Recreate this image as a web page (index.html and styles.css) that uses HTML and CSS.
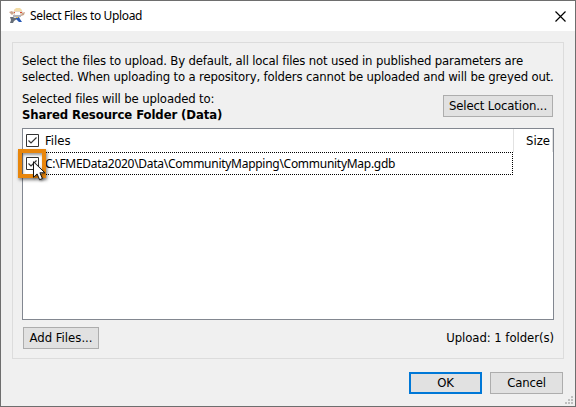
FILE: index.html
```html
<!DOCTYPE html>
<html lang="en">
<head>
<meta charset="utf-8">
<title>Select Files to Upload</title>
<link rel="stylesheet" href="styles.css">
</head>
<body>
<div class="window">
  <header class="titlebar">
    <svg class="app-icon" width="16" height="16" viewBox="0 0 16 16">
      <path d="M4 4l2-3h5l3 3-1 4H5z" fill="#e3d6c8"/>
      <path d="M5 2l2-2h4l2 2v1H5z" fill="#f3dca6"/>
      <path d="M0 4l3-1 2 2-2 2zM13 5l3-1-1 3-3 1z" fill="#c9a48c"/>
      <path d="M5 4h2v1H5zM11 4h2v1h-2z" fill="#d94b32"/>
      <path d="M6 4h5v3H6z" fill="#fff"/>
      <path d="M4 7h8v2H4z" fill="#b3b5ba"/>
      <path d="M1 9h3l2 1 2-1v2l-3 2-1 2H1l1-3z" fill="#666e78"/>
      <path d="M7 10l3-1 1 2 2 3h-3l-3-3z" fill="#2759b5"/>
      <path d="M7 9h2v1H7z" fill="#e5bd49"/>
    </svg>
    <span class="title">Select Files to Upload</span>
    <svg class="close" width="11" height="11" viewBox="0 0 11 11"><path d="M.5.5l10 10M10.5.5l-10 10" stroke="#000" stroke-width="1.2"/></svg>
  </header>
  <section class="group">
    <div class="intro"><div class="l1">Select the files to upload. By default, all local files not used in published parameters are</div><div class="l2">selected. When uploading to a repository, folders cannot be uploaded and will be greyed out.</div></div>
    <div class="location">
      <div class="dest"><div class="l3">Selected files will be uploaded to:</div><div class="l4">Shared Resource Folder (Data)</div></div>
      <button class="btn select"><span>Select Location...</span></button>
    </div>
    <div class="table">
      <div class="thead">
        <div class="col-files"><svg class="check" width="13" height="13" viewBox="0 0 13 13"><path d="M.5.5h12v12H.5z" fill="#fff" stroke="#333"/><path d="M2.5 6.5L5 9l5.5-5.5" fill="none" stroke="#333" stroke-width="1.2"/></svg><span class="files">Files</span></div>
        <div class="col-size"><span>Size</span></div>
      </div>
      <div class="row">
        <svg class="check" width="13" height="13" viewBox="0 0 13 13"><path d="M.5.5h12v12H.5z" fill="#fff" stroke="#333"/><path d="M2.5 6.5L5 9l5.5-5.5" fill="none" stroke="#333" stroke-width="1.2"/></svg>
        <span class="path">C:\FMEData2020\Data\CommunityMapping\CommunityMap.gdb</span>
        <span class="highlight"></span>
        <svg class="cursor" width="13" height="20" viewBox="0 0 13 20"><path d="M.5.8v15.5l3.6-3.4 2.5 5.8 2.8-1.2-2.5-5.7h5z" fill="#fff" stroke="#111"/></svg>
      </div>
    </div>
    <div class="group-foot">
      <button class="btn add"><span>Add Files...</span></button>
      <span class="count">Upload: 1 folder(s)</span>
    </div>
  </section>
  <footer class="actions">
    <button class="btn ok"><span>OK</span></button>
    <button class="btn cancel"><span>Cancel</span></button>
  </footer>
  <svg class="grip" width="8" height="8" viewBox="0 0 8 8" fill="#bfbfbf"><path d="M6 0h2v2H6zM3 3h2v2H3zM6 3h2v2H6zM0 6h2v2H0zM3 6h2v2H3zM6 6h2v2H6z"/></svg>
</div>
</body>
</html>
```
FILE: styles.css
```css
* { box-sizing: border-box; }
body {
  margin: 0;
  color: #000;
  font: 13px/16px "DejaVu Sans Condensed", "DejaVu Sans", sans-serif;
  font-stretch: condensed;
}
span, .intro div, .dest div { white-space: nowrap; }
.window {
  position: relative;
  width: 576px;
  height: 407px;
  border: 1px solid #6e6e6e;
  background: #f0f0f0;
}
.titlebar {
  display: flex;
  align-items: center;
  height: 30px;
  padding: 0 9px 0 8px;
  background: #fff;
}
.title {
  margin-left: 5px;
  font: 12px/16px "Noto Sans", sans-serif;
  letter-spacing: -0.35px;
}
.close { margin-left: auto; }
.group {
  display: flex;
  flex-direction: column;
  width: 552px;
  height: 317px;
  margin: 11px 0 0 11px;
  padding: 10px 9px 0;
  border: 1px solid #dcdcdc;
}
.intro { height: 32px; letter-spacing: -0.168px; }
.location {
  display: flex;
  justify-content: space-between;
  height: 43px;
  padding: 6px 1px 0 0;
}
.l3 { letter-spacing: -0.14px; }
.l4 { font-weight: bold; letter-spacing: -0.1px; }
.btn {
  display: flex;
  align-items: center;
  justify-content: center;
  height: 22px;
  padding: 0;
  border: 1px solid #adadad;
  background: #e1e1e1;
  color: #000;
  font: inherit;
}
.select { width: 110px; margin-top: 4px; letter-spacing: -0.13px; }
.table {
  width: 532px;
  height: 192px;
  border: 1px solid #828790;
  background: #fff;
}
.thead { display: flex; height: 23px; }
.col-files {
  display: flex;
  align-items: center;
  width: 491px;
  padding-left: 3px;
  border-right: 1px solid #e2e2e2;
}
.files { margin-left: 6px; }
.col-size {
  display: flex;
  align-items: center;
  justify-content: flex-end;
  width: 39px;
  padding-right: 2px;
  border-right: 1px solid #e2e2e2;
}
.row {
  position: relative;
  display: flex;
  align-items: center;
  width: 490px;
  height: 23px;
  padding-left: 3px;
  border: 1px dotted #000;
  border-left: 0;
}
.path {
  margin-left: 6px;
  font: 12px/16px "Noto Sans", sans-serif;
  letter-spacing: -0.28px;
}
.highlight {
  position: absolute;
  left: -5px;
  top: -4px;
  width: 28px;
  height: 29px;
  border: 4px solid #e8860c;
  box-shadow: 1px 2px 3px rgba(0, 0, 0, .5), inset 1px 2px 3px rgba(0, 0, 0, .4);
}
.cursor {
  position: absolute;
  left: 10px;
  top: 8px;
  filter: drop-shadow(1px 1px 1px rgba(0, 0, 0, .4));
}
.group-foot {
  display: flex;
  align-items: center;
  justify-content: space-between;
  height: 22px;
  margin-top: 7px;
  padding-left: 1px;
}
.add { width: 76px; }
.count { letter-spacing: -0.06px; }
.actions {
  display: flex;
  justify-content: flex-end;
  gap: 8px;
  margin-top: 13px;
  padding-right: 12px;
}
.ok, .cancel { width: 73px; letter-spacing: -0.15px; }
.ok { border: 2px solid #0078d7; }
.grip { position: absolute; right: 2px; bottom: 2px; }
```
